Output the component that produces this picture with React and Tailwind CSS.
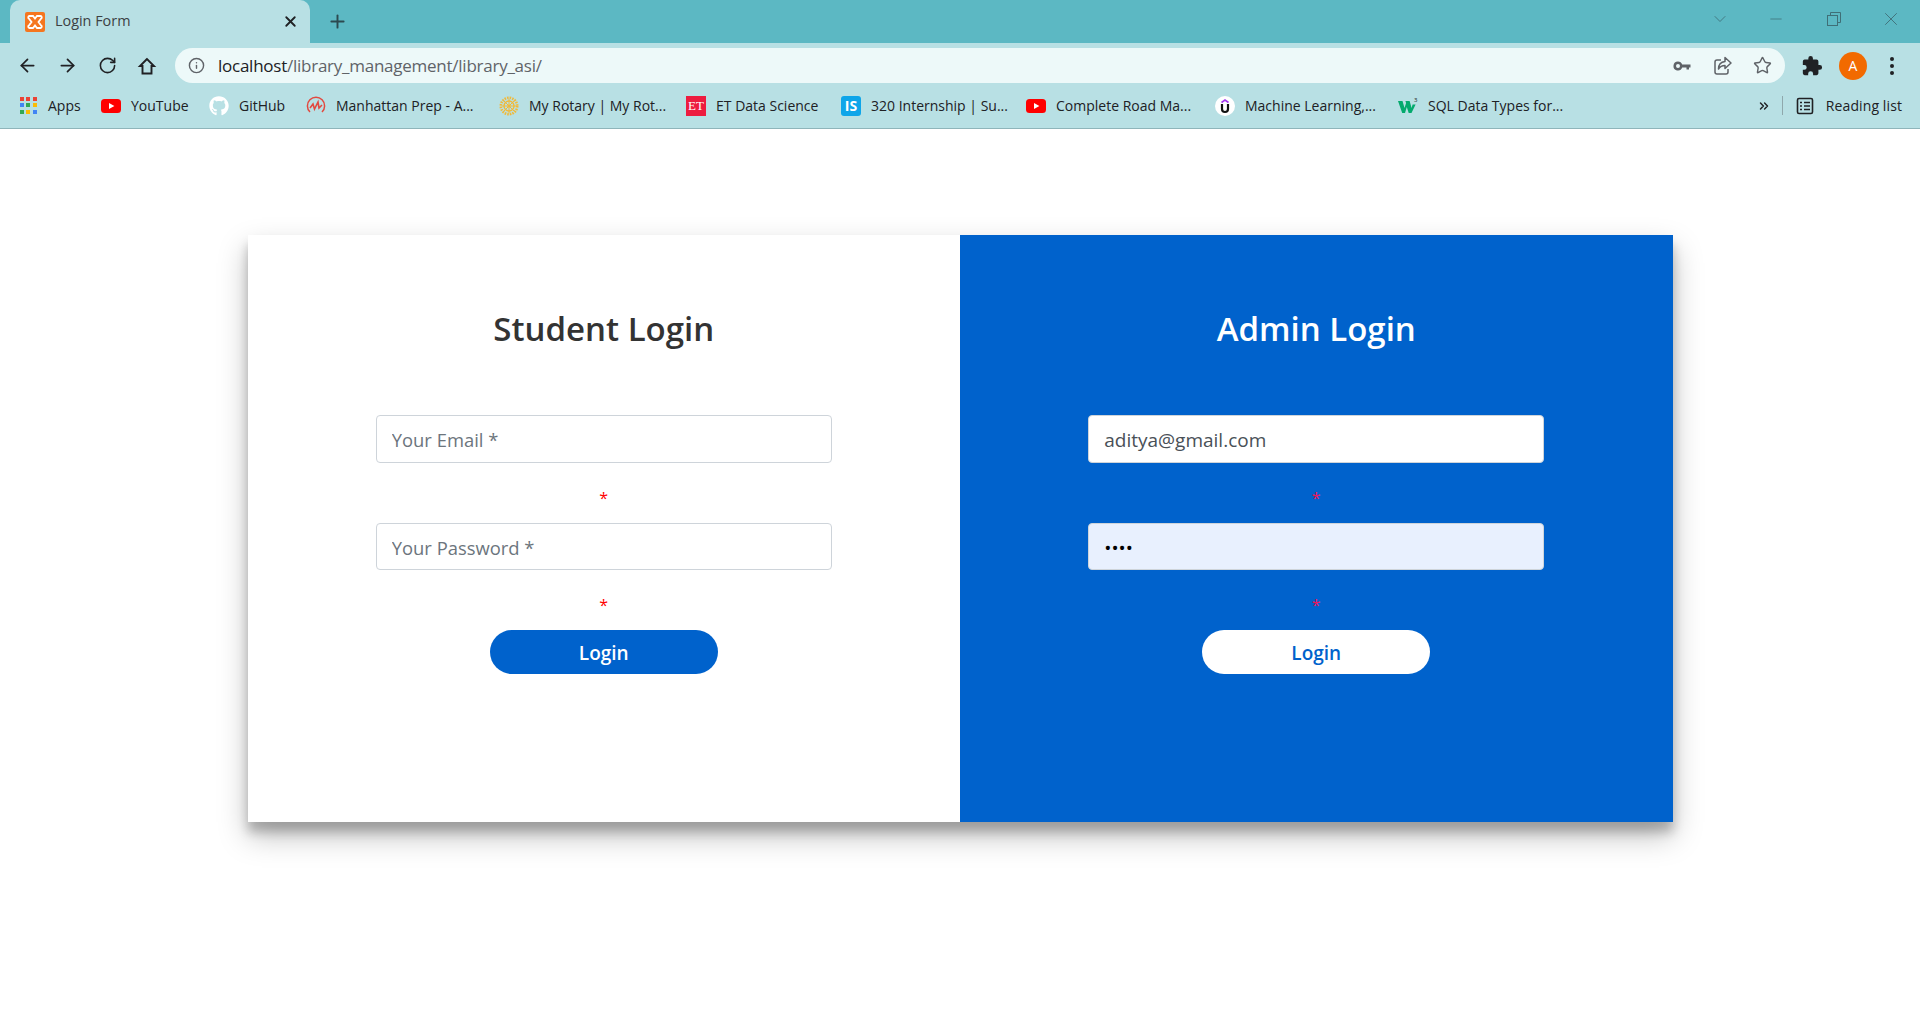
import React from 'react';
import { ArrowLeft, ArrowRight, RotateCw, Info, Star, X, Plus, ChevronDown, Minus, ChevronsRight } from 'lucide-react';
import { FaGithub } from 'react-icons/fa';

const uiFont = 'font-["Open_Sans","Noto_Sans",sans-serif]';

const AppsIcon = () => {
  const colors = ['#ea4335', '#ea4335', '#ea4335', '#4285f4', '#34a853', '#fbbc05', '#34a853', '#fbbc05', '#4285f4'];
  return (
    <div className="grid grid-cols-3 gap-[2px] w-[17px] h-[17px] mr-px">
      {colors.map((c, i) => (
        <span key={i} className="w-[4px] h-[4px]" style={{ background: c }} />
      ))}
    </div>
  );
};

const YoutubeIcon = () => (
  <svg width="20" height="20" viewBox="0 0 20 20">
    <rect x="0" y="3" width="20" height="14" rx="3.5" fill="#f00" />
    <path d="M8 7l5.4 3L8 13z" fill="#fff" />
  </svg>
);

const GithubIcon = () => <FaGithub className="text-[20px] text-white" />;

const ManhattanIcon = () => (
  <svg width="20" height="20" viewBox="0 0 20 20" fill="none" stroke="#e2493f" strokeWidth="1.5">
    <path d="M4 16A8.6 8.6 0 1 1 16 16" />
    <path d="M4 12l3-4 1.5 5L12 6l1 6 3-3" strokeWidth="1.6" />
  </svg>
);

const RotaryIcon = () => (
  <svg width="20" height="20" viewBox="0 0 20 20" fill="none" stroke="#f0b93a">
    <circle cx="10" cy="10" r="8.2" strokeWidth="2.6" strokeDasharray="1.6 1" />
    <circle cx="10" cy="10" r="5" strokeWidth="1.4" />
    <path d="M10 3v14M3 10h14M5 5l10 10M15 5L5 15" strokeWidth="1" />
    <circle cx="10" cy="10" r="1.6" fill="#f0b93a" stroke="none" />
  </svg>
);

const EtIcon = () => (
  <div className="w-[20px] h-[20px] bg-[#ed1c3f] flex items-center justify-center text-white text-[13px] leading-none font-['Liberation_Serif',serif]">ET</div>
);

const IsIcon = () => (
  <div className="w-[20px] h-[20px] rounded-[3px] bg-[#0ea5e9] flex items-center justify-center text-white text-[14px] leading-none font-bold">IS</div>
);

const UdemyIcon = () => (
  <div className="relative w-[20px] h-[20px] rounded-full bg-white">
    <svg width="20" height="20" viewBox="0 0 20 20" fill="none">
      <path d="M6.5 6.5L10 4l3.5 2.5" stroke="#a435f0" strokeWidth="1.6" />
      <path d="M7 8v5a3 3 0 0 0 6 0V8" stroke="#111" strokeWidth="2.2" />
    </svg>
  </div>
);

const W3Icon = () => (
  <svg width="20" height="20" viewBox="0 0 20 20">
    <path d="M0 5h4.5l2 7 1.6-5-.7-2h4.2l2 7 1-3.6h3L13.5 17h-2.8L8.8 11 7 17H4.2z" fill="#04aa6d" />
    <text x="16" y="6" fontSize="6" fill="#222" fontFamily="Open Sans">3</text>
  </svg>
);

const bookmarks = [
  { icon: AppsIcon, label: 'Apps', width: 'w-[81px]' },
  { icon: YoutubeIcon, label: 'YouTube', width: 'w-[108px]' },
  { icon: GithubIcon, label: 'GitHub', width: 'w-[97px]' },
  { icon: ManhattanIcon, label: 'Manhattan Prep - A...', width: 'w-[193px]' },
  { icon: RotaryIcon, label: 'My Rotary | My Rot...', width: 'w-[187px]' },
  { icon: EtIcon, label: 'ET Data Science', width: 'w-[155px]' },
  { icon: IsIcon, label: '320 Internship | Su...', width: 'w-[185px]' },
  { icon: YoutubeIcon, label: 'Complete Road Ma...', width: 'w-[189px]' },
  { icon: UdemyIcon, label: 'Machine Learning,...', width: 'w-[183px]' },
  { icon: W3Icon, label: 'SQL Data Types for...', width: 'w-[180px]' },
];

const KeyIcon = () => (
  <svg width="18" height="18" viewBox="0 0 18 18" fill="#5f6368">
    <path d="M5 4.5a4.5 4.5 0 0 1 4.2 3H17.500v3h-1.500v2h-2.500v-2H9.200A4.500 4.500 0 1 1 5 4.500zm0 2.500a2 2 0 1 0 0 4 2 2 0 0 0 0-4z" />
  </svg>
);

const ShareIcon = () => (
  <svg width="19" height="19" viewBox="0 0 19 19" fill="none" stroke="#5f6368" strokeWidth="1.5" strokeLinejoin="round">
    <path d="M8 4H4a2 2 0 0 0-2 2v10a2 2 0 0 0 2 2h9a2 2 0 0 0 2-2v-3" />
    <path d="M12 1.500l6 5.500-6 5.500V9.500c-3 0-5 1-6.500 3.500 0-4.500 2.500-7 6.500-7.500z" />
  </svg>
);

const HomeIcon = () => (
  <svg width="20" height="20" viewBox="0 0 20 20" fill="none" stroke="#202124" strokeWidth="1.9" strokeLinejoin="miter">
    <path d="M10 3L3 10h2.500v7.500h9V10H17z" />
  </svg>
);

const PuzzleIcon = () => (
  <svg width="22" height="22" viewBox="0 0 24 24" fill="#202124">
    <path d="M20.500 11H19V7a2 2 0 0 0-2-2h-4V3.500a2.500 2.500 0 0 0-5 0V5H4a2 2 0 0 0-2 2v3.800h1.500a2.700 2.700 0 0 1 0 5.400H2V20a2 2 0 0 0 2 2h3.800v-1.500a2.700 2.700 0 0 1 5.400 0V22H17a2 2 0 0 0 2-2v-4h1.500a2.500 2.500 0 0 0 0-5z" />
  </svg>
);

const ReadingListIcon = () => (
  <svg width="18" height="18" viewBox="0 0 18 18" fill="none" stroke="#202124" strokeWidth="1.6">
    <rect x="1.5" y="1.5" width="15" height="15" rx="1.5" />
    <path d="M4 5.500h2M8 5.500h6M4 9h2M8 9h6M4 12.500h2M8 12.500h6" />
  </svg>
);

const XamppIcon = () => (
  <svg width="20" height="20" viewBox="0 0 20 20">
    <rect width="20" height="20" rx="2" fill="#f5761f" />
    <path d="M4.500 4h3.500l2 2.500L12 4h3.500a1.500 1.500 0 0 1 .5 2.800L13.500 10 16 13.200a1.500 1.500 0 0 1-.5 2.800H12l-2-2.500L8 16H4.500A1.500 1.500 0 0 1 4 13.200L6.500 10 4 6.800A1.500 1.500 0 0 1 4.500 4z" fill="none" stroke="#fff" strokeWidth="1.800" />
  </svg>
);

const BrowserChrome = () => (
  <div className={`shrink-0 ${uiFont}`}>
    {/* tab strip */}
    <div className="h-[43px] bg-[#5cb8c3] flex items-end pl-[10px]">
      <div className="w-[300px] h-[43px] bg-[#b8e0e4] rounded-t-[10px] flex items-center pl-[15px] pr-[11px]">
        <XamppIcon />
        <span className="ml-[10px] mb-[2px] text-[14.4px] text-[#3c4043] flex-1">Login Form</span>
        <X size={17} strokeWidth={2.6} className="text-[#202124]" />
      </div>
      <div className="h-[43px] flex items-center ml-[17px]">
        <Plus size={21} strokeWidth={2.2} className="text-[#2c4a50]" />
      </div>
      <div className="flex-1 h-[43px] pb-[6px] flex items-center justify-end text-[#3f6f77]">
        <ChevronDown size={20} strokeWidth={1} className="mr-[37.5px]" />
        <Minus size={18} strokeWidth={1} className="mr-[41.5px]" />
        <svg width="14" height="14" viewBox="0 0 14 14" fill="none" stroke="currentColor" className="mr-[39.5px]">
          <rect x="0.500" y="3.500" width="10" height="10" />
          <path d="M3.500 3.500V0.500h10v10h-3" />
        </svg>
        <X size={22} strokeWidth={1} className="mr-[18px]" />
      </div>
    </div>
    {/* toolbar */}
    <div className="h-[40px] bg-[#b8e0e4] flex items-end pl-[7px]">
      <div className="h-[35px] flex items-center">
        <div className="w-[40px] flex justify-center"><ArrowLeft size={21} strokeWidth={2} className="text-[#202124]" /></div>
        <div className="w-[40px] flex justify-center"><ArrowRight size={21} strokeWidth={2} className="text-[#202124]" /></div>
        <div className="w-[40px] flex justify-center"><RotateCw size={19} strokeWidth={2} className="text-[#202124]" /></div>
        <div className="w-[40px] flex justify-center"><HomeIcon /></div>
      </div>
      <div className="ml-[8px] w-[1610px] h-[35px] rounded-full bg-[#edf9f9] flex items-center pl-[13px] pr-[3px]">
        <Info size={17} strokeWidth={2} className="text-[#5f6368]" />
        <span className="ml-[13px] flex-1 text-[17px] tracking-[-0.25px] text-[#5f6368]">
          <span className="text-[#202124]">localhost</span>/library_management/library_asi/
        </span>
        <div className="w-[40px] flex justify-center"><KeyIcon /></div>
        <div className="w-[40px] flex justify-center"><ShareIcon /></div>
        <div className="w-[40px] flex justify-center"><Star size={19} strokeWidth={1.8} className="text-[#5f6368]" /></div>
      </div>
      <div className="h-[35px] flex items-center ml-[7px]">
        <div className="w-[40px] flex justify-center"><PuzzleIcon /></div>
        <div className="w-[40px] flex justify-center">
          <div className="ml-[2px] w-[28px] h-[28px] rounded-full bg-[#f26a00] text-white text-[14px] flex items-center justify-center">A</div>
        </div>
        <div className="w-[40px] flex flex-col items-center gap-[3px]">
          <span className="w-[4px] h-[4px] rounded-full bg-[#202124]" />
          <span className="w-[4px] h-[4px] rounded-full bg-[#202124]" />
          <span className="w-[4px] h-[4px] rounded-full bg-[#202124]" />
        </div>
      </div>
    </div>
    {/* bookmarks bar */}
    <div className="h-[46px] bg-[#b8e0e4] border-b border-[#8fb5ba] flex items-center pl-[20px] pr-[18px] text-[14px] text-[#202124]">
      <div className="flex items-center flex-1">
        {bookmarks.map((b, i) => (
          <div key={i} className={`flex items-center gap-[10px] whitespace-nowrap ${b.width}`}>
            <b.icon />
            <span>{b.label}</span>
          </div>
        ))}
      </div>
      <ChevronsRight size={14} strokeWidth={2.5} className="text-[#202124] mr-[11px]" />
      <div className="w-px h-[19px] bg-[#8fa8ac] mr-[13px]" />
      <ReadingListIcon />
      <span className="ml-[12px] text-[#202124] tracking-[0.1px]">Reading list</span>
    </div>
  </div>
);

const LoginPanel = ({ title, dark, email, password }) => (
  <div className={`w-1/2 flex flex-col items-center pt-[71px] ${dark ? 'bg-[#0062cc]' : 'bg-white'}`}>
    <h2 className={`text-[33px] leading-[46px] font-semibold ${dark ? 'text-white' : 'text-[#333]'}`}>{title}</h2>
    <input
      type="email"
      readOnly
      value={email || ''}
      placeholder="Your Email *"
      className="mt-[63px] w-[456px] h-[48px] pl-[15px] pr-[16px] pt-[2px] bg-white border border-[#ced4da] rounded-[4px] text-[19px] text-[#495057] placeholder:text-[18.4px] placeholder:text-[#6c757d] outline-none"
    />
    <div className={`h-[60px] pt-[10px] flex items-center justify-center text-[16px] ${dark ? 'text-[#f0145a]' : 'text-[#ff0000]'}`}>*</div>
    <input
      type="password"
      readOnly
      value={password || ''}
      placeholder="Your Password *"
      className={`w-[456px] h-[47px] pl-[15px] pr-[16px] pt-[2px] border border-[#ced4da] rounded-[4px] text-[19px] text-black placeholder:text-[18.4px] placeholder:text-[#6c757d] outline-none ${password ? 'bg-[#e8f0fe]' : 'bg-white'}`}
    />
    <div className={`h-[60px] pt-[10px] flex items-center justify-center text-[16px] ${dark ? 'text-[#f0145a]' : 'text-[#ff0000]'}`}>*</div>
    <button className={`w-[228px] h-[44px] pt-[2px] rounded-full text-[19px] font-semibold ${dark ? 'bg-white text-[#0062cc]' : 'bg-[#0062cc] text-white'}`}>
      Login
    </button>
  </div>
);

export default function App() {
  return (
    <div className={`h-[1020px] flex flex-col bg-white overflow-hidden ${uiFont}`}>
      <BrowserChrome />
      <div className="flex-1 pt-[106px] flex justify-center">
        <div className="w-[1425px] h-[587px] flex shadow-[0_14px_28px_rgba(0,0,0,0.25),0_10px_10px_rgba(0,0,0,0.22)]">
          <LoginPanel title="Student Login" />
          <LoginPanel title="Admin Login" dark email="aditya@gmail.com" password="abcd" />
        </div>
      </div>
    </div>
  );
}
